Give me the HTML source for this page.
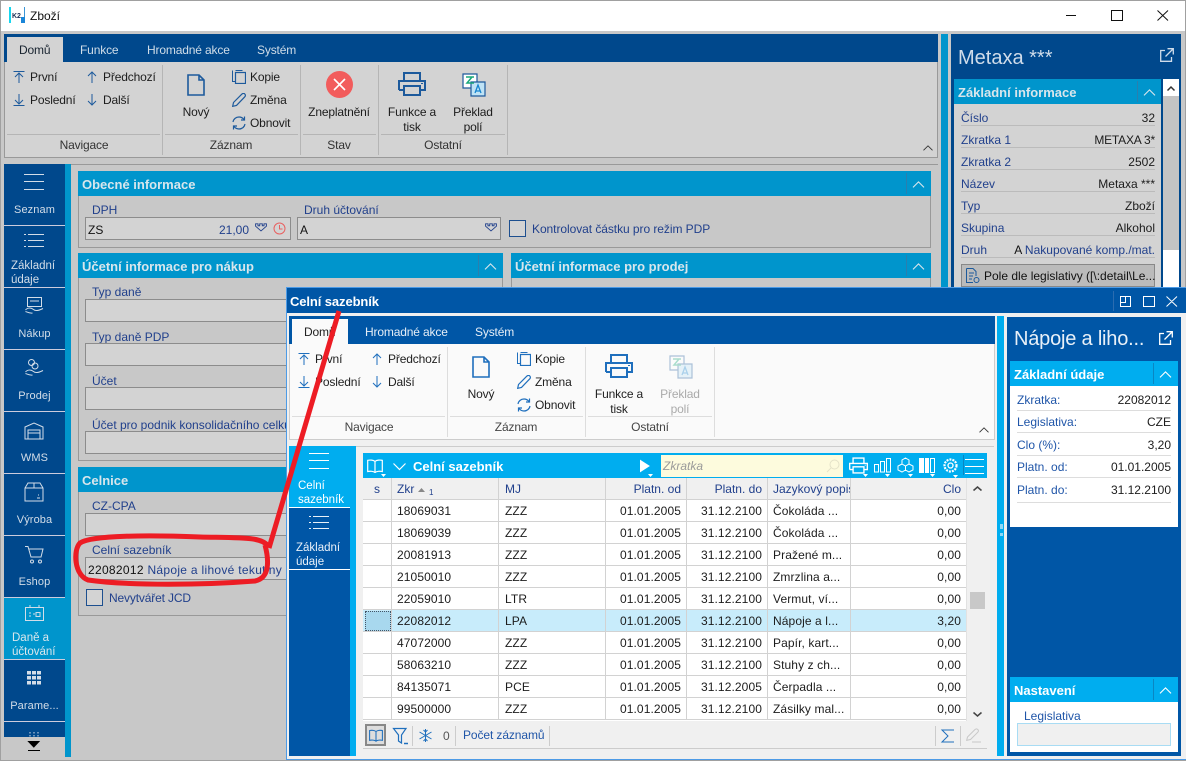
<!DOCTYPE html>
<html lang="cs"><head><meta charset="utf-8"><title>Zboží</title>
<style>
html,body{margin:0;padding:0}
body{width:1186px;height:761px;overflow:hidden;position:relative;background:#c8c8c8;font:12px/14px "Liberation Sans",sans-serif;color:#1c1c1c}
div,span,svg{position:absolute;box-sizing:border-box}
.t{white-space:nowrap;line-height:14px}
.c{transform:translateX(-50%);text-align:center}
.r{transform:translateX(-100%)}
.b{font-weight:bold;font-size:13px}
svg{fill:none;stroke:currentColor;stroke-width:1;overflow:visible}
.lb{color:#21408c}
.nv{color:#d3dde8;text-align:center;white-space:nowrap;line-height:14px;font-size:11px;letter-spacing:.1px}
.inp{background:#d3d3d3;border:1px solid #8c8c8c}
.hd{background:#0095cc;color:#d8e6ec}
.sep{width:1px;background:#b5b5b5}
.rib1{color:#1d5a9c}.rib2{color:#1f6fbd}
.wr{left:0;top:0;width:0;height:0}
.rl{letter-spacing:-.15px}
.num{letter-spacing:.1px}
</style></head><body>
<svg width="0" height="0" style="position:absolute">
<symbol id="first" viewBox="0 0 12 12"><path d="M.5 .5H11.5M6 2V12M2 6L6 2L10 6"/></symbol>
<symbol id="last" viewBox="0 0 12 12"><path d="M.5 11.5H11.5M6 0V10M2 6L6 10L10 6"/></symbol>
<symbol id="prev" viewBox="0 0 12 12"><path d="M6 1V12M2 5L6 1L10 5"/></symbol>
<symbol id="next" viewBox="0 0 12 12"><path d="M6 0V11M2 7L6 11L10 7"/></symbol>
<symbol id="copy" viewBox="0 0 14 14"><path d="M3.5 .5H10.5M.5 .5V11.5H3"/><path d="M3.5 2.5H13.5V13.5H3.5Z" stroke-width="1.2"/></symbol>
<symbol id="pen" viewBox="0 0 14 14"><path d="M.7 13.3L1.5 9.5L10 1C11 .2 12 .2 12.8 1C13.6 1.8 13.6 3 12.8 3.8L4.5 12.4Z" stroke-width="1.2"/></symbol>
<symbol id="ref" viewBox="0 0 14 14"><path d="M1 6C1.5 3 4 1 7 1C9 1 10.8 2 12 3.5M13 8C12.5 11 10 13 7 13C5 13 3.2 12 2 10.5" stroke-width="1.2"/><path d="M12.5 .5V4H9M1.5 13.5V10H5" stroke-width="1.2"/></symbol>
<symbol id="new" viewBox="0 0 18 22"><path d="M1 1H12L17 6V21H1ZM12 1V6H17" stroke-width="1.6"/></symbol>
<symbol id="print" viewBox="0 0 28 24"><path d="M6 9V1H22V9M1 18V9H27V18H22M6 18H1M6 14H22V23H6Z" stroke-width="2"/><path d="M23 11.500h2" stroke-width="1"/></symbol>
<symbol id="menu" viewBox="0 0 20 16"><path d="M0 .5H20M0 7.500H20M0 15.500H20"/></symbol>
<symbol id="list" viewBox="0 0 20 14"><path d="M4 .5H20M4 6.500H20M4 12.500H20M0 .5H2M0 6.500H2M0 12.500H2"/></symbol>
<symbol id="ext" viewBox="0 0 14 14"><path d="M5 2.500H.7V13.300H11.500V9M7.500 .7H13.300V6.500M13 1L5.500 8.500" stroke-width="1.3"/></symbol>
<symbol id="chev" viewBox="0 0 14 8"><path d="M.7 7.300L7 1L13.300 7.300" stroke-width="1.3"/></symbol>
<symbol id="book" viewBox="0 0 16 14"><path d="M8 2.500C6.500 1 3 .8 .7 1.300V12.500C3 12 6.500 12.200 8 13.500C9.500 12.200 13 12 15.300 12.500V1.300C13 .8 9.500 1 8 2.500ZM8 2.500V13.500" stroke-width="1.2"/></symbol>
<symbol id="dd" viewBox="0 0 14 10"><path d="M.7 .7H3.500V3H5.500V.7H8.500V3H10.500V.7H13.300V3.500L7 9L.7 3.500Z" stroke-width="1.1"/></symbol>
<symbol id="trans" viewBox="0 0 24 24"><path d="M1 1H15V15H1Z" fill="#fff" stroke="#1d5a9c" stroke-width="1.200"/><path d="M9 9H23V23H9Z" fill="#bfe3f5" stroke="#1d5a9c" stroke-width="1.200"/><path d="M4 4H12M10 4L5 10H12" stroke="#1aa87a" stroke-width="1.500"/><path d="M13 20L16 12L19 20M14 18H18" stroke="#1785d0" stroke-width="1.300"/></symbol>
</svg>

<!-- window chrome -->
<div style="left:0;top:0;width:1186px;height:761px;border:1px solid #a0a0a0;border-top-width:1px"></div>
<div style="left:1px;top:1px;width:1184px;height:30px;background:#fff"></div>
<div style="left:9px;top:7px;width:2px;height:16px;background:#17d6ee"></div>
<div style="left:11px;top:7px;width:14px;height:16px;background:#fff;border-right:1px solid #3a95d6"></div>
<div class="t" style="left:12px;top:10px;font-size:7px;font-weight:bold;color:#1b2f55">K2</div>
<div style="left:21px;top:17px;width:4px;height:6px;background:#1b86d8"></div>
<div class="t" style="left:30px;top:9px;color:#111">Zboží</div>
<svg style="left:1066px;top:10px" width="104" height="11" viewBox="0 0 104 11" color="#111"><path d="M0 5.500H10M45.500 .5H56.500V10.500H45.500ZM91.500 .5L102 10.500M102 .5L91.500 10.500"/></svg>

<!-- main ribbon -->
<div style="left:4px;top:34px;width:934px;height:28px;background:#00488c"></div>
<div style="left:7px;top:37px;width:56px;height:25px;background:#d3d3d3"></div>
<div class="wr rl">
<div class="t" style="left:19px;top:43px;color:#18232f">Domů</div>
<div class="t" style="left:80px;top:43px;color:#d0dde8">Funkce</div>
<div class="t" style="left:147px;top:43px;color:#d0dde8">Hromadné akce</div>
<div class="t" style="left:257px;top:43px;color:#d0dde8">Systém</div>
</div>
<div style="left:4px;top:62px;width:934px;height:96px;background:#d3d3d3;border:1px solid #999;border-top:0"></div>

<div class="rib1" style="left:0;top:0;width:0;height:0">
<svg style="left:13px;top:71px" width="12" height="12"><use href="#first"/></svg>
<svg style="left:13px;top:94px" width="12" height="12"><use href="#last"/></svg>
<svg style="left:86px;top:71px" width="12" height="12"><use href="#prev"/></svg>
<svg style="left:86px;top:94px" width="12" height="12"><use href="#next"/></svg>
<svg style="left:232px;top:70px" width="14" height="14"><use href="#copy"/></svg>
<svg style="left:232px;top:93px" width="14" height="14"><use href="#pen"/></svg>
<svg style="left:232px;top:116px" width="14" height="14"><use href="#ref"/></svg>
<svg style="left:187px;top:74px" width="18" height="22"><use href="#new"/></svg>
<svg style="left:398px;top:72px" width="28" height="24"><use href="#print"/></svg>
<svg style="left:462px;top:73px" width="24" height="24"><use href="#trans"/></svg>
</div>
<div class="wr rl">
<div class="t" style="left:30px;top:70px">První</div>
<div class="t" style="left:30px;top:93px">Poslední</div>
<div class="t" style="left:103px;top:70px">Předchozí</div>
<div class="t" style="left:103px;top:93px">Další</div>
<div class="t c" style="left:196px;top:105px">Nový</div>
<div class="t" style="left:250px;top:70px">Kopie</div>
<div class="t" style="left:250px;top:93px">Změna</div>
<div class="t" style="left:250px;top:116px">Obnovit</div>
</div>
<div style="left:326px;top:71px;width:27px;height:27px;border-radius:50%;background:#f25c5c"></div>
<svg style="left:333px;top:78px" width="13" height="13" color="#fff"><path d="M1 1L12 12M12 1L1 12" stroke-width="1.600"/></svg>
<div class="wr rl">
<div class="t c" style="left:339px;top:105px">Zneplatnění</div>
<div class="t c" style="left:412px;top:105px">Funkce a<br><span style="position:static;line-height:16px">tisk</span></div>
<div class="t c" style="left:473px;top:105px">Překlad<br><span style="position:static;line-height:16px">polí</span></div>
<div class="t c" style="left:84px;top:138px;color:#333">Navigace</div>
<div class="t c" style="left:231px;top:138px;color:#333">Záznam</div>
<div class="t c" style="left:339px;top:138px;color:#333">Stav</div>
<div class="t c" style="left:443px;top:138px;color:#333">Ostatní</div>
</div>
<div style="left:7px;top:134px;width:153px;height:1px;background:#b5b5b5"></div>
<div style="left:165px;top:134px;width:133px;height:1px;background:#b5b5b5"></div>
<div style="left:303px;top:134px;width:73px;height:1px;background:#b5b5b5"></div>
<div style="left:381px;top:134px;width:124px;height:1px;background:#b5b5b5"></div>
<div class="sep" style="left:162px;top:65px;height:90px"></div>
<div class="sep" style="left:300px;top:65px;height:90px"></div>
<div class="sep" style="left:378px;top:65px;height:90px"></div>
<div class="sep" style="left:507px;top:65px;height:90px"></div>
<svg style="left:923px;top:145px" width="10" height="6" color="#333"><use href="#chev"/></svg>

<!-- main left nav -->
<div style="left:4px;top:164px;width:934px;height:1px;background:#999"></div>
<div style="left:4px;top:164px;width:61px;height:593px;background:#00488c"></div>
<div style="left:65px;top:164px;width:6px;height:593px;background:#0095cc"></div>
<div style="left:4px;top:598px;width:67px;height:61px;background:#0095cc"></div>
<div style="left:4px;top:225px;width:61px;height:1px;background:#ccd"></div>
<div style="left:4px;top:287px;width:61px;height:1px;background:#ccd"></div>
<div style="left:4px;top:349px;width:61px;height:1px;background:#ccd"></div>
<div style="left:4px;top:411px;width:61px;height:1px;background:#ccd"></div>
<div style="left:4px;top:473px;width:61px;height:1px;background:#ccd"></div>
<div style="left:4px;top:535px;width:61px;height:1px;background:#ccd"></div>
<div style="left:4px;top:597px;width:61px;height:1px;background:#ccd"></div>
<div style="left:4px;top:659px;width:61px;height:1px;background:#ccd"></div>
<div style="left:4px;top:721px;width:61px;height:1px;background:#ccd"></div>
<div style="left:0;top:0;width:0;height:0;color:#d3dde8">
<svg style="left:24px;top:174px" width="20" height="16"><use href="#menu"/></svg>
<svg style="left:24px;top:234px" width="20" height="14"><use href="#list"/></svg>
<svg style="left:25px;top:297px" width="19" height="18" viewBox="0 0 19 18" stroke-width="1.100"><path d="M2.500 .5H16.500V9.500H2.500ZM5 4H14" /><path d="M.5 13C2.500 10.500 6 10.500 8.500 12.500C10.500 14.500 14 13.500 18 11.500M.5 14.500C3 15.500 5 16.500 7.500 16"/></svg>
<svg style="left:25px;top:359px" width="19" height="18" viewBox="0 0 19 18" stroke-width="1.100"><circle cx="6.500" cy="3.500" r="3"/><circle cx="10" cy="7" r="3"/><path d="M.5 13C2.500 10.500 6 10.500 8.500 12.500C10.500 14.500 14 13.500 18 11.500M.5 14.500C3 15.500 5 16.500 7.500 16"/></svg>
<svg style="left:24px;top:422px" width="20" height="18" viewBox="0 0 20 18" stroke-width="1.500"><path d="M1 17V5L10 1L19 5V17ZM4 17V8H16V17M4 11H16"/></svg>
<svg style="left:24px;top:482px" width="20" height="20" viewBox="0 0 20 20" stroke-width="1.200"><path d="M1 6L4 1H16L19 6V19H1ZM1 6H19M10 1V6M13 16H16M14 13H15"/></svg>
<svg style="left:25px;top:546px" width="19" height="18" viewBox="0 0 19 18" stroke-width="1.200"><path d="M0 .5H3L6 11H16L18 3H4"/><circle cx="7" cy="15.500" r="1.500"/><circle cx="15" cy="15.500" r="1.500"/></svg>
<svg style="left:25px;top:605px" width="19" height="16" viewBox="0 0 19 16" stroke-width="1.200"><path d="M.5 2.500H18.500V15.500H.5ZM5 0V3M14 0V3M4 8H6M4 11H6M8 9H10M11 7.500H15V11.500H11Z"/></svg>
<svg style="left:27px;top:671px;stroke:none" width="14" height="14" viewBox="0 0 14 14"><path style="stroke:none;fill:#d3dde8" d="M0 0h4v3.500H0zM5 0h4v3.500H5zM10 0h4v3.500h-4zM0 5h4v3.500H0zM5 5h4v3.500H5zM10 5h4v3.500h-4zM0 10h4v3.500H0zM5 10h4v3.500H5zM10 10h4v3.500h-4z"/></svg>
<svg style="left:29px;top:732px" width="12" height="5" viewBox="0 0 12 5" stroke-width="1.200" stroke-dasharray="1.500 1.500"><path d="M1 0V5M5 0V5M9 0V5"/></svg>
</div>
<div style="left:4px;top:737px;width:61px;height:20px;background:#c8c8c8"></div>
<svg style="left:28px;top:741px" width="12" height="10" color="#000"><path d="M.5 .5H11L5.800 6Z" fill="#000"/><path d="M0 9.500H12"/></svg>
<div class="nv" style="left:4px;width:61px;top:203px">Seznam</div>
<div class="t" style="left:11px;top:259px;color:#d3dde8;font-size:11.500px">Základní<br><span style="position:static;line-height:13px">údaje</span></div>
<div class="nv" style="left:4px;width:61px;top:327px">Nákup</div>
<div class="nv" style="left:4px;width:61px;top:389px">Prodej</div>
<div class="nv" style="left:4px;width:61px;top:451px">WMS</div>
<div class="nv" style="left:4px;width:61px;top:513px">Výroba</div>
<div class="nv" style="left:4px;width:61px;top:575px">Eshop</div>
<div class="t" style="left:12px;top:631px;color:#d8e6ec;font-size:11.500px">Daně a<br><span style="position:static;line-height:13px">účtování</span></div>
<div class="nv" style="left:4px;width:61px;top:699px">Parame...</div>

<!-- main panels -->
<div style="left:78px;top:171px;width:853px;height:77px;border:1px solid #999"></div>
<div class="hd" style="left:78px;top:171px;width:853px;height:25px"></div>
<div class="t b" style="left:82px;top:178px;color:#d8e6ec">Obecné informace</div>
<div style="left:906px;top:173px;width:1px;height:21px;background:#2a7fae"></div>
<svg style="left:912px;top:181px" width="13" height="7" color="#d8e6ec"><use href="#chev"/></svg>
<div class="t lb" style="left:92px;top:203px">DPH</div>
<div class="inp" style="left:85px;top:217px;width:206px;height:23px"></div>
<div class="t" style="left:88px;top:223px;color:#111">ZS</div>
<div class="t r" style="left:249px;top:223px;color:#21408c">21,00</div>
<svg style="left:255px;top:223px" width="12" height="9" color="#21408c"><use href="#dd"/></svg>
<svg style="left:273px;top:222px" width="13" height="13" viewBox="0 0 13 13" color="#e86060"><circle cx="6.500" cy="6.500" r="5.500"/><path d="M6.500 3V7H9.500"/></svg>
<div class="t lb" style="left:304px;top:203px">Druh účtování</div>
<div class="inp" style="left:297px;top:217px;width:204px;height:23px"></div>
<div class="t" style="left:300px;top:223px;color:#111">A</div>
<svg style="left:485px;top:223px" width="12" height="9" color="#21408c"><use href="#dd"/></svg>
<div style="left:509px;top:220px;width:17px;height:17px;border:1px solid #1d4f8f;background:#d3d3d3"></div>
<div class="t lb" style="left:532px;top:222px;letter-spacing:-.06px">Kontrolovat částku pro režim PDP</div>

<div style="left:78px;top:253px;width:425px;height:208px;border:1px solid #999"></div>
<div class="hd" style="left:78px;top:253px;width:425px;height:25px"></div>
<div class="t b" style="left:82px;top:260px;color:#d8e6ec">Účetní informace pro nákup</div>
<div style="left:478px;top:255px;width:1px;height:21px;background:#2a7fae"></div>
<svg style="left:484px;top:263px" width="13" height="7" color="#d8e6ec"><use href="#chev"/></svg>
<div style="left:511px;top:253px;width:420px;height:208px;border:1px solid #999"></div>
<div class="hd" style="left:511px;top:253px;width:420px;height:25px"></div>
<div class="t b" style="left:515px;top:260px;color:#d8e6ec">Účetní informace pro prodej</div>
<div style="left:906px;top:255px;width:1px;height:21px;background:#2a7fae"></div>
<svg style="left:912px;top:263px" width="13" height="7" color="#d8e6ec"><use href="#chev"/></svg>

<div class="t lb" style="left:92px;top:285px">Typ daně</div>
<div class="inp" style="left:85px;top:299px;width:210px;height:23px"></div>
<div class="t lb" style="left:92px;top:330px">Typ daně PDP</div>
<div class="inp" style="left:85px;top:343px;width:210px;height:23px"></div>
<div class="t lb" style="left:92px;top:374px">Účet</div>
<div class="inp" style="left:85px;top:387px;width:210px;height:23px"></div>
<div class="t lb" style="left:92px;top:418px">Účet pro podnik konsolidačního celku</div>
<div class="inp" style="left:85px;top:431px;width:210px;height:23px"></div>

<div style="left:78px;top:467px;width:425px;height:149px;border:1px solid #999"></div>
<div class="hd" style="left:78px;top:467px;width:425px;height:25px"></div>
<div class="t b" style="left:82px;top:474px;color:#d8e6ec">Celnice</div>
<div class="t lb" style="left:92px;top:499px">CZ-CPA</div>
<div class="inp" style="left:85px;top:513px;width:210px;height:23px"></div>
<div class="t lb" style="left:92px;top:543px">Celní sazebník</div>
<div class="inp" style="left:85px;top:557px;width:210px;height:23px"></div>
<div class="t" style="left:88px;top:563px;color:#111;letter-spacing:.3px">22082012 <span style="position:static;color:#21408c">Nápoje a lihové tekutiny</span></div>
<div style="left:86px;top:589px;width:17px;height:17px;border:1px solid #1d4f8f;background:#d3d3d3"></div>
<div class="t lb rl" style="left:109px;top:591px">Nevytvářet JCD</div>

<!-- main right panel -->
<div style="left:941px;top:34px;width:7px;height:723px;background:#0095cc"></div>
<div style="left:951px;top:34px;width:230px;height:723px;background:#00488c"></div>
<div class="t" style="left:958px;top:46px;font-size:20px;line-height:24px;color:#cfdcea">Metaxa ***</div>
<svg style="left:1160px;top:48px" width="14" height="14" color="#cfdcea"><use href="#ext"/></svg>
<div style="left:954px;top:104px;width:207px;height:190px;background:#d3d3d3"></div>
<div class="hd" style="left:954px;top:79px;width:207px;height:25px"></div>
<div class="t b" style="left:958px;top:86px;color:#d8e6ec">Základní informace</div>
<div style="left:1137px;top:81px;width:1px;height:21px;background:#2a7fae"></div>
<svg style="left:1143px;top:89px" width="13" height="7" color="#d8e6ec"><use href="#chev"/></svg>
<div style="left:1163px;top:79px;width:16px;height:215px;background:#fff"></div>
<div style="left:1163px;top:96px;width:16px;height:154px;background:#c4c4c4"></div>
<svg style="left:1167px;top:86px" width="8" height="5" color="#333"><path d="M.5 4.500L4 1L7.500 4.500" stroke-width="1.500"/></svg>
<div class="t lb" style="left:961px;top:111px">Číslo</div><div class="t r" style="left:1155px;top:111px">32</div>
<div class="t lb" style="left:961px;top:133px">Zkratka 1</div><div class="t r" style="left:1155px;top:133px;letter-spacing:-.2px">METAXA 3*</div>
<div class="t lb" style="left:961px;top:155px">Zkratka 2</div><div class="t r" style="left:1155px;top:155px">2502</div>
<div class="t lb" style="left:961px;top:177px">Název</div><div class="t r" style="left:1155px;top:177px">Metaxa ***</div>
<div class="t lb" style="left:961px;top:199px">Typ</div><div class="t r" style="left:1155px;top:199px">Zboží</div>
<div class="t lb" style="left:961px;top:221px">Skupina</div><div class="t r" style="left:1155px;top:221px">Alkohol</div>
<div class="t lb" style="left:961px;top:243px">Druh</div><div class="t r lb" style="left:1155px;top:243px"><span style="position:static;color:#111">A</span> Nakupované komp./mat.</div>
<div style="left:961px;top:125px;width:194px;height:1px;background:#bbb"></div>
<div style="left:961px;top:147px;width:194px;height:1px;background:#bbb"></div>
<div style="left:961px;top:169px;width:194px;height:1px;background:#bbb"></div>
<div style="left:961px;top:191px;width:194px;height:1px;background:#bbb"></div>
<div style="left:961px;top:213px;width:194px;height:1px;background:#bbb"></div>
<div style="left:961px;top:235px;width:194px;height:1px;background:#bbb"></div>
<div style="left:961px;top:257px;width:194px;height:1px;background:#bbb"></div>
<div style="left:961px;top:264px;width:194px;height:23px;background:#bbb;border:1px solid #888"></div>
<svg style="left:966px;top:268px" width="14" height="16" viewBox="0 0 14 16" color="#1d5a9c"><path d="M.5 .5H7L10 3.500V8M.5 .5V14.500H7M3 5H8M3 8H7M3 11H6"/><circle cx="10.500" cy="12" r="2.500"/></svg>
<div class="t" style="left:984px;top:269px;color:#111;width:171px;overflow:hidden">Pole dle legislativy ([\:detail\Le...</div>

<!-- dialog -->
<div style="left:286px;top:287px;width:900px;height:473px;background:#f0f0f0;border:1px solid #4d9be6;border-right:0"></div>
<div style="left:287px;top:288px;width:899px;height:25px;background:#0056a6"></div>
<div class="t b" style="left:290px;top:295px;color:#fff;letter-spacing:-.1px">Celní sazebník</div>
<div style="left:1113px;top:291px;width:1px;height:20px;background:#2b6cb0"></div>
<svg style="left:1120px;top:296px" width="58" height="11" viewBox="0 0 58 11" color="#fff"><path d="M.5 .5H10.500V10.500H.5ZM.5 6.500H5.500V.5M23.500 .5H34.500V10.500H23.500ZM46.500 .5L57 10.500M57 .5L46.500 10.500"/></svg>

<div style="left:289px;top:316px;width:706px;height:28px;background:#0056a6"></div>
<div style="left:292px;top:319px;width:56px;height:25px;background:#fafafa"></div>
<div class="wr rl">
<div class="t" style="left:304px;top:325px;color:#222">Domů</div>
<div class="t" style="left:365px;top:325px;color:#e6eef7">Hromadné akce</div>
<div class="t" style="left:475px;top:325px;color:#e6eef7">Systém</div>
</div>
<div style="left:289px;top:344px;width:706px;height:96px;background:#fafafa;border:1px solid #ccc;border-top:0"></div>

<div class="rib2" style="left:285px;top:282px;width:0;height:0">
<svg style="left:13px;top:71px" width="12" height="12"><use href="#first"/></svg>
<svg style="left:13px;top:94px" width="12" height="12"><use href="#last"/></svg>
<svg style="left:86px;top:71px" width="12" height="12"><use href="#prev"/></svg>
<svg style="left:86px;top:94px" width="12" height="12"><use href="#next"/></svg>
<svg style="left:232px;top:70px" width="14" height="14"><use href="#copy"/></svg>
<svg style="left:232px;top:93px" width="14" height="14"><use href="#pen"/></svg>
<svg style="left:232px;top:116px" width="14" height="14"><use href="#ref"/></svg>
<svg style="left:187px;top:74px" width="18" height="22"><use href="#new"/></svg>
<svg style="left:320px;top:72px" width="28" height="24"><use href="#print"/></svg>
<svg style="left:384px;top:73px;opacity:.35" width="24" height="24"><use href="#trans"/></svg>
</div>
<div class="wr rl">
<div class="t" style="left:315px;top:352px;color:#222">První</div>
<div class="t" style="left:315px;top:375px;color:#222">Poslední</div>
<div class="t" style="left:388px;top:352px;color:#222">Předchozí</div>
<div class="t" style="left:388px;top:375px;color:#222">Další</div>
<div class="t c" style="left:481px;top:387px;color:#222">Nový</div>
<div class="t" style="left:535px;top:352px;color:#222">Kopie</div>
<div class="t" style="left:535px;top:375px;color:#222">Změna</div>
<div class="t" style="left:535px;top:398px;color:#222">Obnovit</div>
<div class="t c" style="left:619px;top:387px;color:#222">Funkce a<br><span style="position:static;line-height:16px">tisk</span></div>
<div class="t c" style="left:680px;top:387px;color:#aaa">Překlad<br><span style="position:static;line-height:16px">polí</span></div>
<div class="t c" style="left:369px;top:420px;color:#444">Navigace</div>
<div class="t c" style="left:516px;top:420px;color:#444">Záznam</div>
<div class="t c" style="left:650px;top:420px;color:#444">Ostatní</div>
</div>
<div style="left:292px;top:416px;width:153px;height:1px;background:#ddd"></div>
<div style="left:450px;top:416px;width:133px;height:1px;background:#ddd"></div>
<div style="left:588px;top:416px;width:124px;height:1px;background:#ddd"></div>
<div style="left:447px;top:347px;width:1px;height:90px;background:#ddd"></div>
<div style="left:585px;top:347px;width:1px;height:90px;background:#ddd"></div>
<div style="left:714px;top:347px;width:1px;height:90px;background:#ddd"></div>
<svg style="left:979px;top:427px" width="10" height="6" color="#333"><use href="#chev"/></svg>

<!-- dialog nav -->
<div style="left:356px;top:446px;width:638px;height:1px;background:#ccc"></div>
<div style="left:289px;top:446px;width:61px;height:310px;background:#0056a6"></div>
<div style="left:350px;top:446px;width:6px;height:310px;background:#00adef"></div>
<div style="left:289px;top:446px;width:67px;height:61px;background:#00adef"></div>
<div style="left:289px;top:507px;width:61px;height:1px;background:#fff"></div>
<div style="left:289px;top:569px;width:61px;height:1px;background:#fff"></div>
<svg style="left:309px;top:453px" width="20" height="16" color="#fff"><use href="#menu"/></svg>
<svg style="left:309px;top:516px" width="20" height="14" color="#e8f0f8"><use href="#list"/></svg>
<div class="t" style="left:298px;top:479px;color:#fff;font-size:11.500px">Celní<br><span style="position:static;line-height:13px">sazebník</span></div>
<div class="t" style="left:296px;top:541px;color:#e8f0f8;font-size:11.500px">Základní<br><span style="position:static;line-height:13px">údaje</span></div>

<!-- grid -->
<div style="left:363px;top:453px;width:624px;height:296px;background:#f0f0f0;border-bottom:1px solid #ccc"></div>
<div style="left:363px;top:453px;width:624px;height:25px;background:#00adef"></div>
<svg style="left:367px;top:459px" width="16" height="14" color="#fff"><use href="#book"/></svg>
<svg style="left:393px;top:463px" width="13" height="7" color="#fff"><path d="M.5 .5L6.500 6.500L12.500 .5" stroke-width="1.200"/></svg>
<div class="t b" style="left:413px;top:460px;color:#fff">Celní sazebník</div>
<svg style="left:640px;top:460px" width="12" height="14" color="#fff"><path d="M.5 .5L9 6L.5 11.500Z" fill="#fff"/></svg>
<div style="left:661px;top:455px;width:182px;height:22px;background:#fdfbdd"></div>
<div class="t" style="left:663px;top:459px;font-style:italic;color:#9a9a9a">Zkratka</div>
<svg style="left:826px;top:459px" width="14" height="14" viewBox="0 0 14 14" color="#e4e2c8"><circle cx="8.500" cy="5.500" r="4.500"/><path d="M5 9L1 13"/></svg>
<svg style="left:849px;top:457px" width="19" height="17" color="#fff"><use href="#print"/></svg>
<svg style="left:874px;top:458px" width="17" height="15" viewBox="0 0 17 15" color="#fff" stroke-width="1.400"><path d="M.5 6.500H4.500V14H.5ZM6.500 3.500H10.500V14H6.500ZM12.500 .5H16.500V14H12.500Z"/></svg>
<svg style="left:897px;top:457px" width="17" height="16" viewBox="0 0 17 16" color="#fff" stroke-width="1.400"><path d="M8.500 1L12 3V7L8.500 9L5 7V3ZM5 7L8.500 9V13L5 15L1 13V9ZM12 7L16 9V13L12 15L8.500 13V9Z"/></svg>
<div style="left:919px;top:458px;width:5px;height:15px;background:#fff"></div>
<div style="left:925px;top:458px;width:4px;height:15px;background:#fff"></div>
<div style="left:930px;top:458px;width:5px;height:15px;border:1px solid #fff"></div>
<svg style="left:943px;top:458px" width="15" height="15" viewBox="0 0 15 15" color="#fff"><circle cx="7.500" cy="7.500" r="2.500" stroke-width="1.300"/><circle cx="7.500" cy="7.500" r="6" stroke-width="2.200" stroke-dasharray="2 1"/></svg>
<svg style="left:0;top:0" width="1186" height="761" viewBox="0 0 1186 761"><path style="stroke:none;fill:#fff" d="M381 474h5l-2.500 3zM648 474h5l-2.500 3zM863 474h5l-2.500 3zM885 474h5l-2.500 3zM908 474h5l-2.500 3zM930 474h5l-2.500 3zM953 475h5l-2.500 3z"/></svg>
<div style="left:963px;top:455px;width:1px;height:20px;background:#0a86c2"></div>
<svg style="left:965px;top:459px" width="19" height="15" viewBox="0 0 19 15" color="#fff"><path d="M0 .5H19M0 7.500H19M0 14.500H19"/></svg>

<div style="left:363px;top:500px;width:603px;height:221px;background:#fff"></div>
<div style="left:363px;top:610px;width:603px;height:22px;background:#c8ecfb"></div>
<div style="left:365px;top:611px;width:26px;height:20px;background:#a8d8ee;border:1px dotted #456"></div>

<div style="left:363px;top:499px;width:603px;height:1px;background:#d2d2d2"></div>
<div style="left:363px;top:521px;width:603px;height:1px;background:#d2d2d2"></div>
<div style="left:363px;top:543px;width:603px;height:1px;background:#d2d2d2"></div>
<div style="left:363px;top:565px;width:603px;height:1px;background:#d2d2d2"></div>
<div style="left:363px;top:587px;width:603px;height:1px;background:#d2d2d2"></div>
<div style="left:363px;top:609px;width:603px;height:1px;background:#d2d2d2"></div>
<div style="left:363px;top:631px;width:603px;height:1px;background:#d2d2d2"></div>
<div style="left:363px;top:653px;width:603px;height:1px;background:#d2d2d2"></div>
<div style="left:363px;top:675px;width:603px;height:1px;background:#d2d2d2"></div>
<div style="left:363px;top:697px;width:603px;height:1px;background:#d2d2d2"></div>
<div style="left:363px;top:719px;width:603px;height:1px;background:#d2d2d2"></div>
<div style="left:391px;top:478px;width:1px;height:242px;background:#d2d2d2"></div>
<div style="left:498px;top:478px;width:1px;height:242px;background:#d2d2d2"></div>
<div style="left:605px;top:478px;width:1px;height:242px;background:#d2d2d2"></div>
<div style="left:686px;top:478px;width:1px;height:242px;background:#d2d2d2"></div>
<div style="left:767px;top:478px;width:1px;height:242px;background:#d2d2d2"></div>
<div style="left:850px;top:478px;width:1px;height:242px;background:#d2d2d2"></div>
<div style="left:966px;top:478px;width:1px;height:243px;background:#e2e2e2"></div>

<div class="t c lb" style="left:377px;top:482px">s</div>
<div class="t lb" style="left:397px;top:482px">Zkr</div>
<svg style="left:418px;top:487px" width="14" height="9"><path style="stroke:none;fill:#888" d="M0 5L3.500 1L7 5Z"/></svg>
<div class="t lb" style="left:429px;top:486px;font-size:8px">1</div>
<div class="t lb" style="left:505px;top:482px">MJ</div>
<div class="t r lb" style="left:681px;top:482px">Platn. od</div>
<div class="t r lb" style="left:762px;top:482px">Platn. do</div>
<div class="t lb" style="left:773px;top:482px;width:77px;overflow:hidden">Jazykový popis</div>
<div class="t r lb" style="left:961px;top:482px">Clo</div>

<div class="wr num">
<div class="t" style="left:397px;top:504px">18069031</div><div class="t" style="left:505px;top:504px">ZZZ</div><div class="t r" style="left:681px;top:504px">01.01.2005</div><div class="t r" style="left:762px;top:504px">31.12.2100</div><div class="t" style="left:773px;top:504px">Čokoláda ...</div><div class="t r" style="left:961px;top:504px">0,00</div>
<div class="t" style="left:397px;top:526px">18069039</div><div class="t" style="left:505px;top:526px">ZZZ</div><div class="t r" style="left:681px;top:526px">01.01.2005</div><div class="t r" style="left:762px;top:526px">31.12.2100</div><div class="t" style="left:773px;top:526px">Čokoláda ...</div><div class="t r" style="left:961px;top:526px">0,00</div>
<div class="t" style="left:397px;top:548px">20081913</div><div class="t" style="left:505px;top:548px">ZZZ</div><div class="t r" style="left:681px;top:548px">01.01.2005</div><div class="t r" style="left:762px;top:548px">31.12.2100</div><div class="t" style="left:773px;top:548px">Pražené m...</div><div class="t r" style="left:961px;top:548px">0,00</div>
<div class="t" style="left:397px;top:570px">21050010</div><div class="t" style="left:505px;top:570px">ZZZ</div><div class="t r" style="left:681px;top:570px">01.01.2005</div><div class="t r" style="left:762px;top:570px">31.12.2100</div><div class="t" style="left:773px;top:570px">Zmrzlina a...</div><div class="t r" style="left:961px;top:570px">0,00</div>
<div class="t" style="left:397px;top:592px">22059010</div><div class="t" style="left:505px;top:592px">LTR</div><div class="t r" style="left:681px;top:592px">01.01.2005</div><div class="t r" style="left:762px;top:592px">31.12.2100</div><div class="t" style="left:773px;top:592px">Vermut, ví...</div><div class="t r" style="left:961px;top:592px">0,00</div>
<div class="t" style="left:397px;top:614px">22082012</div><div class="t" style="left:505px;top:614px">LPA</div><div class="t r" style="left:681px;top:614px">01.01.2005</div><div class="t r" style="left:762px;top:614px">31.12.2100</div><div class="t" style="left:773px;top:614px">Nápoje a l...</div><div class="t r" style="left:961px;top:614px">3,20</div>
<div class="t" style="left:397px;top:636px">47072000</div><div class="t" style="left:505px;top:636px">ZZZ</div><div class="t r" style="left:681px;top:636px">01.01.2005</div><div class="t r" style="left:762px;top:636px">31.12.2100</div><div class="t" style="left:773px;top:636px">Papír, kart...</div><div class="t r" style="left:961px;top:636px">0,00</div>
<div class="t" style="left:397px;top:658px">58063210</div><div class="t" style="left:505px;top:658px">ZZZ</div><div class="t r" style="left:681px;top:658px">01.01.2005</div><div class="t r" style="left:762px;top:658px">31.12.2100</div><div class="t" style="left:773px;top:658px">Stuhy z ch...</div><div class="t r" style="left:961px;top:658px">0,00</div>
<div class="t" style="left:397px;top:680px">84135071</div><div class="t" style="left:505px;top:680px">PCE</div><div class="t r" style="left:681px;top:680px">01.01.2005</div><div class="t r" style="left:762px;top:680px">31.12.2005</div><div class="t" style="left:773px;top:680px">Čerpadla ...</div><div class="t r" style="left:961px;top:680px">0,00</div>
<div class="t" style="left:397px;top:702px">99500000</div><div class="t" style="left:505px;top:702px">ZZZ</div><div class="t r" style="left:681px;top:702px">01.01.2005</div><div class="t r" style="left:762px;top:702px">31.12.2100</div><div class="t" style="left:773px;top:702px">Zásilky mal...</div><div class="t r" style="left:961px;top:702px">0,00</div>
</div>

<div style="left:970px;top:592px;width:15px;height:17px;background:#c8c8c8"></div>
<svg style="left:973px;top:486px" width="9" height="5" color="#444"><path d="M.5 4.500L4.500 1L8.500 4.500" stroke-width="1.500"/></svg>
<svg style="left:973px;top:712px" width="9" height="5" color="#444"><path d="M.5 .5L4.500 4L8.500 .5" stroke-width="1.500"/></svg>

<!-- grid footer -->
<div style="left:365px;top:724px;width:21px;height:22px;background:#ddd;border:2px solid #888"></div>
<svg style="left:369px;top:729px" width="14" height="13" color="#1f6fbd"><use href="#book"/></svg>
<svg style="left:393px;top:728px" width="16" height="18" viewBox="0 0 16 18" color="#1f6fbd"><path d="M.5 .5H13L8.500 7V15L5.500 13V7Z" stroke-width="1.200"/><path d="M11 15.500H15" stroke="#1f6fbd" stroke-width="1.500"/></svg>
<div style="left:412px;top:726px;width:1px;height:20px;background:#ccc"></div>
<svg style="left:418px;top:728px" width="15" height="15" viewBox="0 0 15 15" color="#1f6fbd" stroke-width="1.600"><path d="M7.500 1V14M1.500 4L13.500 11M13.500 4L1.500 11M5.500 2L7.500 4L9.500 2M5.500 13L7.500 11L9.500 13"/></svg>
<div class="t" style="left:443px;top:729px;color:#555">0</div>
<div style="left:455px;top:726px;width:1px;height:20px;background:#ccc"></div>
<div class="t" style="left:463px;top:728px;color:#1f55a8;letter-spacing:-.1px">Počet záznamů</div>
<div style="left:549px;top:726px;width:1px;height:20px;background:#ccc"></div>
<div style="left:935px;top:726px;width:1px;height:20px;background:#ccc"></div>
<svg style="left:941px;top:729px" width="14" height="14" viewBox="0 0 14 14" color="#1f6fbd" stroke-width="1.300"><path d="M13 1H1L7 7L1 13H13"/></svg>
<div style="left:960px;top:726px;width:1px;height:20px;background:#ccc"></div>
<svg style="left:966px;top:728px" width="15" height="15" viewBox="0 0 15 15" color="#c8c8c8"><path d="M.7 12.300L1.500 9L9 1.500C10 .7 11 .7 11.800 1.500C12.600 2.300 12.600 3.300 11.800 4.200L4.500 11.500ZM6 14H15"/></svg>

<!-- dialog right panel -->
<div style="left:997px;top:316px;width:7px;height:440px;background:#00adef"></div>
<div style="left:1000px;top:524px;width:3px;height:5px;background:#8fd8f7"></div>
<div style="left:1000px;top:533px;width:3px;height:3px;background:#8fd8f7"></div>
<div style="left:1007px;top:317px;width:174px;height:439px;background:#0056a6"></div>
<div class="t" style="left:1014px;top:327px;font-size:20px;line-height:24px;color:#e8f0f8;letter-spacing:-.2px">Nápoje a liho...</div>
<svg style="left:1159px;top:331px" width="14" height="14" color="#fff"><use href="#ext"/></svg>
<div style="left:1010px;top:361px;width:168px;height:25px;background:#00adef"></div>
<div class="t b" style="left:1014px;top:368px;color:#fff">Základní údaje</div>
<div style="left:1153px;top:363px;width:1px;height:21px;background:#0a86c2"></div>
<svg style="left:1159px;top:371px" width="13" height="7" color="#fff"><use href="#chev"/></svg>
<div style="left:1010px;top:386px;width:168px;height:141px;background:#fff"></div>
<div class="t" style="left:1017px;top:393px;color:#1f55a8">Zkratka:</div><div class="t r" style="left:1171px;top:393px">22082012</div>
<div class="t" style="left:1017px;top:415px;color:#1f55a8">Legislativa:</div><div class="t r" style="left:1171px;top:415px">CZE</div>
<div class="t" style="left:1017px;top:438px;color:#1f55a8">Clo (%):</div><div class="t r" style="left:1171px;top:438px">3,20</div>
<div class="t" style="left:1017px;top:460px;color:#1f55a8">Platn. od:</div><div class="t r" style="left:1171px;top:460px">01.01.2005</div>
<div class="t" style="left:1017px;top:483px;color:#1f55a8">Platn. do:</div><div class="t r" style="left:1171px;top:483px">31.12.2100</div>
<div style="left:1017px;top:410px;width:154px;height:1px;background:#ddd"></div>
<div style="left:1017px;top:432px;width:154px;height:1px;background:#ddd"></div>
<div style="left:1017px;top:455px;width:154px;height:1px;background:#ddd"></div>
<div style="left:1017px;top:477px;width:154px;height:1px;background:#ddd"></div>
<div style="left:1017px;top:502px;width:154px;height:1px;background:#ddd"></div>
<div style="left:1010px;top:677px;width:168px;height:25px;background:#00adef"></div>
<div class="t b" style="left:1014px;top:684px;color:#fff">Nastavení</div>
<div style="left:1153px;top:679px;width:1px;height:21px;background:#0a86c2"></div>
<svg style="left:1159px;top:687px" width="13" height="7" color="#fff"><use href="#chev"/></svg>
<div style="left:1010px;top:702px;width:168px;height:50px;background:#fff"></div>
<div class="t" style="left:1024px;top:709px;color:#1f55a8">Legislativa</div>
<div style="left:1017px;top:723px;width:154px;height:23px;background:#f0f0f0;border:1px solid #a8dcf4"></div>

<!-- red annotation -->
<svg style="left:0;top:0;z-index:50" width="1186" height="761" viewBox="0 0 1186 761" color="#ed1c24"><path d="M339 311L269 548" stroke-width="5"/><path d="M268 546C262 537 245 538 200 537C150 535 92 535 80 543C73 550 74 575 88 580C130 586 205 585 255 581C270 578 269 560 265 545" stroke-width="5"/></svg>
</body></html>
